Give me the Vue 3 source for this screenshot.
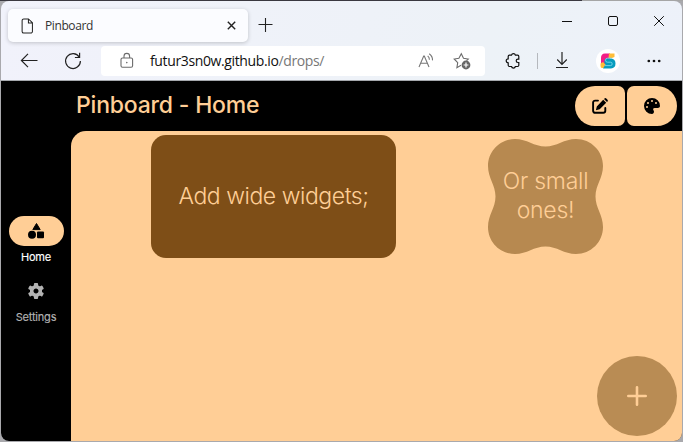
<script setup>
const tabs = [
  { name: 'Home', icon: 'shapes', active: true },
  { name: 'Settings', icon: 'gear', active: false }
]
const teeth = [0, 60, 120, 180, 240, 300]
</script>

<template>
  <div class="desktop">
    <div class="window">
      <div class="tabstrip">
        <div class="tab">
          <svg class="file" viewBox="0 0 14 17"><path d="M3 .9h5L12.3 5v9.3a1.8 1.8 0 0 1-1.8 1.8H3a1.8 1.8 0 0 1-1.8-1.8V2.7A1.8 1.8 0 0 1 3 .9ZM8 1v4.2h4.2" /></svg>
          <span class="tab-title">Pinboard</span>
          <svg class="close" viewBox="0 0 9 9"><path d="m.8.8 7.4 7.4M8.2.8.8 8.2" /></svg>
        </div>
        <svg class="plus" viewBox="0 0 14 14"><path d="M7.5 0v14M.5 6.5h14" /></svg>
        <div class="controls">
          <svg viewBox="0 0 12 12"><path d="M1 6.5h10" /></svg>
          <svg viewBox="0 0 12 12"><rect x="1.5" y="1.5" width="9" height="9" rx="1.5" /></svg>
          <svg viewBox="0 0 12 12"><path d="m1.2 1.2 9.6 9.6M10.8 1.2l-9.6 9.6" /></svg>
        </div>
      </div>

      <div class="toolbar">
        <svg class="back" viewBox="0 0 18 16"><path d="M17.5 7.5H2M8 .9 1.4 7.5 8 14.1" /></svg>
        <svg class="reload" viewBox="0 0 18 18"><path d="M15.3 5.2A7.4 7.4 0 1 0 16.4 9M15.6 .8v4.7h-4.7" /></svg>
        <div class="address">
          <svg class="lock" viewBox="0 0 14 17"><rect x="1" y="6" width="11.6" height="9.3" rx="1.5" /><path d="M4 6V4.2a2.8 2.8 0 0 1 5.6 0V6" /><circle cx="6.8" cy="10.6" r=".8" /></svg>
          <span class="url">futur3sn0w.github.io<i>/drops/</i></span>
          <svg class="aloud" viewBox="0 0 16 16"><path d="m1 14 4.7-11h.6L11 14M2.8 10.2h6.4M9.7 2.8a5 5 0 0 1 1.7 4M11.2.8a7.5 7.5 0 0 1 3.3 6.6" /></svg>
          <svg class="star" viewBox="0 0 18 18"><path d="M8 13.2 3.9 15.6l.8-5L1.2 7l4.7-.8L8.3 1.8l2.2 4.4 4.8.8-1.8 1.7" /><circle cx="13" cy="13" r="4.4" /><path class="mark" d="M13 10.6v4.8M10.6 13h4.8" /></svg>
        </div>
        <svg class="puzzle" viewBox="0 0 16 17"><path d="M4.4 3.2h2.1a2 2 0 0 1 3.9 0h2.2a1.2 1.2 0 0 1 1.2 1.2v2.7h-.9a1.7 1.7 0 0 0 0 3.4h.9v2.8a1.2 1.2 0 0 1-1.2 1.2h-2.2a2 2 0 0 1-3.9 0H4.4a1.2 1.2 0 0 1-1.2-1.2v-2.5a2 2 0 0 1 0-4V4.4a1.2 1.2 0 0 1 1.2-1.2Z" /></svg>
        <div class="divider"></div>
        <svg class="download" viewBox="0 0 14 17"><path d="M7 0v12M2.2 7.5 7 12.3l4.8-4.8M1 15.5h12" /></svg>
        <div class="profile">
          <svg viewBox="0 0 16 16">
            <path d="M5 .5h5V6L5 12l-4 1V5Q1 .5 5 .5Z" fill="#f21d85" />
            <path d="M9 .5h5.5V4L12 5H8.5ZM.5 10.5 3 9l3 3-2 3H2Q.5 15 .5 13Z" fill="#ffbd38" />
            <path d="M5.5 5.5H11q4.5.5 4.5 5T11 15.5H3l2.5-4Q3 9 5.5 5.5Z" fill="#079cbd" />
            <path d="M12 5.2H7.5a2 2 0 0 0 0 4h3a1.7 1.7 0 0 1 0 3.4H5" fill="none" stroke="#7bd5ec" stroke-width=".9" />
          </svg>
        </div>
        <svg class="more" viewBox="0 0 14 4"><circle cx="1.8" cy="2" r="1.35" /><circle cx="7" cy="2" r="1.35" /><circle cx="12.2" cy="2" r="1.35" /></svg>
      </div>

      <div class="app">
        <nav class="rail">
          <div v-for="tab in tabs" :key="tab.name" class="nav-item" :class="{ active: tab.active }">
            <div class="pill">
              <svg v-if="tab.icon === 'shapes'" viewBox="0 0 18 18"><path d="M9.5 1.5 13.2 7.6H5.8Z" stroke="#000" stroke-linejoin="round" /><circle cx="5" cy="12.8" r="4" /><rect x="10" y="9.4" width="7" height="6.8" rx="1" /></svg>
              <svg v-else viewBox="-9 -9 18 18">
                <rect v-for="a in teeth" :key="a" x="-2.1" y="-8.1" width="4.2" height="5" rx="1" :transform="`rotate(${a})`" />
                <circle r="4.3" fill="none" stroke="currentColor" stroke-width="3.6" />
              </svg>
            </div>
            <span>{{ tab.name }}</span>
          </div>
        </nav>
        <div class="main">
          <header>
            <h1>Pinboard - Home</h1>
            <div class="actions">
              <button class="first">
                <svg viewBox="0 0 16 16"><path d="M6 2.6H3.1A2 2 0 0 0 1.1 4.6v8.2a2 2 0 0 0 2 2h8.2a2 2 0 0 0 2-2V10" fill="none" stroke="#000" stroke-width="1.9" stroke-linecap="round" /><path d="m11.2 1.8 3 3-6.5 6.5-3.8.9.9-3.8ZM12 1l.5-.5a1.3 1.3 0 0 1 1.8 0l1.2 1.2a1.3 1.3 0 0 1 0 1.8L15 4Z" /></svg>
              </button>
              <button class="last">
                <svg viewBox="0 0 16 16"><path fill-rule="evenodd" d="M16 8v.1c0 1.2-1.1 1.9-2.2 1.9h-3.1a1.5 1.5 0 0 0-1.4 2c.2.5.7.9.7 1.7 0 1.1-.8 2.3-2 2.3a8 8 0 1 1 8-8ZM4 9a1 1 0 1 0-2 0 1 1 0 0 0 2 0Zm0-3a1 1 0 1 0 0-2 1 1 0 0 0 0 2Zm5-3a1 1 0 1 0-2 0 1 1 0 0 0 2 0Zm3 3a1 1 0 1 0 0-2 1 1 0 0 0 0 2Z" /></svg>
              </button>
            </div>
          </header>
          <section class="board">
            <div class="cell"><div class="wide"><span>Add wide widgets;</span></div></div>
            <div class="cell">
              <div class="small">
                <svg viewBox="0 0 115 115"><path d="M27 0C39 0 46 7.5 57.5 7.5S76 0 88 0C103 0 115 12 115 27C115 39 107.5 46 107.5 57.5S115 76 115 88C115 103 103 115 88 115C76 115 69 107.5 57.5 107.5S39 115 27 115C12 115 0 103 0 88C0 76 7.5 69 7.5 57.5S0 39 0 27C0 12 12 0 27 0Z" /></svg>
                <span>Or small<br>ones!</span>
              </div>
            </div>
            <button class="fab"><svg viewBox="0 0 20 20"><path d="M10 1.3v17.4M1.3 10h17.4" /></svg></button>
          </section>
        </div>
      </div>
    </div>
  </div>
</template>

<style>
body { overflow: hidden; }
</style>

<style scoped>
* { box-sizing: border-box; }
svg { display: block; flex: none; overflow: visible; }
button { border: 0; padding: 0; display: flex; align-items: center; justify-content: center; }
.desktop { width: 683px; height: 442px; padding: 1px; background: linear-gradient(90deg, #3a3840 0 582px, #a5a5a5 582px) top / 100% 1px no-repeat, #a9a9ad; }
.window { width: 681px; height: 440px; border-radius: 8px; overflow: hidden; display: flex; flex-direction: column; background: linear-gradient(100deg, #f1f2fb, #edf2f7 65%, #edf1fa); }
.tabstrip { height: 45px; padding: 8px 0 0 7px; display: flex; flex: none; }
.tab { width: 240px; height: 33px; padding: 0 12px 0 13px; border-radius: 5px; background: #fbfcff; box-shadow: 0 1px 4px #0003; display: flex; align-items: center; }
.file { width: 13px; height: 16px; fill: none; stroke: #222; stroke-width: 1.1; }
.tab-title { margin-left: 11px; font: 12px/16px "Open Sans", sans-serif; color: #333; letter-spacing: -.4px; }
.close { width: 9px; height: 9px; margin-left: auto; stroke: #222; stroke-width: 1.4; }
.plus { width: 14px; height: 14px; margin: 9px 0 0 10px; stroke: #222; stroke-width: 1.1; }
.controls { margin: 6px 17px 0 auto; display: flex; gap: 34px; }
.controls svg { width: 12px; height: 12px; fill: none; stroke: #111; stroke-width: 1; }
.toolbar { height: 35px; padding: 0 20px 5px 19px; display: flex; align-items: center; flex: none; border-bottom: 1px solid #a5a8ad; }
.back { width: 18px; height: 16px; fill: none; stroke: #222; stroke-width: 1.2; }
.reload { width: 18px; height: 18px; margin-left: 26px; fill: none; stroke: #222; stroke-width: 1.2; }
.address { width: 384px; height: 30px; margin-left: 19px; padding: 0 14px 0 19px; background: #fff; border-radius: 4px; display: flex; align-items: center; }
.lock { width: 14px; height: 17px; fill: none; stroke: #6b6b6b; stroke-width: 1.1; }
.lock circle { fill: #6b6b6b; stroke: none; }
.url { margin-left: 16px; font: 14px/20px "Open Sans", sans-serif; color: #111; letter-spacing: -.37px; }
.url i { font-style: normal; color: #777; }
.aloud { width: 16px; height: 16px; margin-left: auto; fill: none; stroke: #777; stroke-width: 1.1; }
.star { width: 18px; height: 18px; margin-left: 19px; fill: none; stroke: #6b6b6b; stroke-width: 1.1; }
.star circle { fill: #666; stroke: none; }
.star .mark { stroke: #fff; stroke-width: 1.2; }
.puzzle { width: 16px; height: 17px; margin-left: 20px; fill: none; stroke: #111; stroke-width: 1.2; }
.divider { width: 1px; height: 16px; margin-left: 16px; background: #b5b8bd; }
.download { width: 14px; height: 17px; margin-left: 17px; fill: none; stroke: #222; stroke-width: 1.2; }
.profile { width: 24px; height: 24px; margin: 0 27px; border-radius: 50%; background: #fff; display: flex; align-items: center; justify-content: center; }
.profile svg { width: 16px; height: 16px; }
.more { width: 14px; height: 4px; fill: #111; }
.app { flex: 1; display: flex; background: #000; font-family: Inter, sans-serif; }
.rail { width: 70px; display: flex; flex-direction: column; justify-content: center; align-items: center; gap: 9px; padding-top: 21px; }
.nav-item { display: flex; flex-direction: column; align-items: center; color: #b3b3b3; font-size: 11px; line-height: 20px; }
.nav-item.active { color: #fff; }
.nav-item span { margin-top: 1px; letter-spacing: -.2px; -webkit-text-stroke: .15px currentColor; }
.pill { width: 55px; height: 30px; border-radius: 15px; display: flex; align-items: center; justify-content: center; }
.pill svg { width: 18px; height: 18px; fill: currentColor; }
.active .pill { background: #ffce96; color: #000; }
.main { flex: 1; display: flex; flex-direction: column; }
header { height: 50px; padding: 0 5px; display: flex; align-items: center; justify-content: space-between; }
h1 { margin: 0 0 2px; font-size: 23px; line-height: 30px; font-weight: 500; letter-spacing: -.2px; color: #ffce96; }
.actions { display: flex; gap: 2px; }
.actions button { width: 50px; height: 40px; background: #ffce96; }
.actions svg { width: 16px; height: 16px; }
.first { border-radius: 20px 7px 7px 20px; }
.last { border-radius: 7px 20px 20px 7px; }
.board { position: relative; flex: 1; background: #ffce96; border-radius: 15px 0 0 0; display: flex; color: #ffce96; font-size: 23px; font-weight: 300; line-height: 29px; letter-spacing: -.45px; text-align: center; }
.cell { padding-top: 4px; padding-left: 80px; }
.cell + .cell { padding: 8px 0 0 92px; }
.wide { width: 245px; height: 123px; border-radius: 15px; background: #7e4e17; display: flex; align-items: center; justify-content: center; }
.small { width: 115px; height: 115px; display: grid; place-items: center; letter-spacing: -.25px; }
.small > * { grid-area: 1 / 1; }
.small svg { width: 115px; height: 115px; fill: #b78950; }
.small span { z-index: 1; white-space: nowrap; padding-bottom: 2px; }
.fab { position: absolute; right: 5px; bottom: 5px; width: 80px; height: 80px; border-radius: 50%; background: #b98c54; }
.fab svg { width: 20px; height: 20px; stroke: #ffce96; stroke-width: 2.6; stroke-linecap: round; }
</style>
